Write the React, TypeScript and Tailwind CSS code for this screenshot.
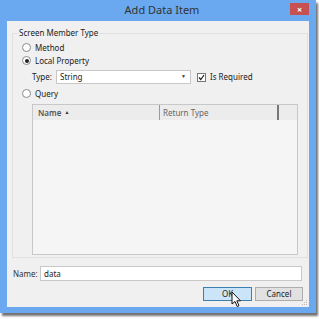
import React from 'react';

const font = { fontFamily: '"Noto Sans", "Open Sans", sans-serif' };

function Radio({ label, checked }: { label: string; checked?: boolean }) {
  return (
    <div className="flex items-center h-[13px] gap-[4px]">
      <div className="w-[9px] h-[9px] rounded-full border border-[#8a8a8a] bg-white flex items-center justify-center">
        {checked && <div className="w-[4px] h-[4px] rounded-full bg-[#222]" />}
      </div>
      <span className="text-[8px] text-[#222]">{label}</span>
    </div>
  );
}

export default function App() {
  return (
    <div className="w-[319px] h-[319px] bg-white" style={font}>
      <div className="w-[316px] h-[313px] bg-[#6aa8f0] shadow-[2px_3px_2px_rgba(0,0,0,0.55)] flex flex-col">
        {/* title bar */}
        <div className="relative h-[21px] flex items-center justify-center">
          <span className="text-[11px] text-[#333] pl-[8px]">Add Data Item</span>
          <div className="absolute right-[7px] top-[3px] w-[19px] h-[12px] bg-[#c75050] flex items-center justify-center">
            <span className="text-white text-[9px] font-bold leading-none">×</span>
          </div>
        </div>

        {/* content */}
        <div className="relative mx-[7px] h-[286px] bg-[#f0f0f0] flex flex-col">
          <fieldset className="mx-[5px] mt-[6px] h-[231px] border border-[#e0e0e0] px-[9px]">
            <legend className="text-[8px] text-[#222] px-[1px] -ml-[4px]">Screen Member Type</legend>
            <div className="flex flex-col">
              <div className="mt-[2px]"><Radio label="Method" /></div>
              <div><Radio label="Local Property" checked /></div>
              <div className="flex items-center mt-[3px] ml-[10px] h-[14px]">
                <span className="text-[8px] text-[#222] w-[24px]">Type:</span>
                <div className="w-[135px] h-[14px] border border-[#c8c8c8] bg-white flex items-center justify-between pl-[3px] pr-[4px]">
                  <span className="text-[8px] text-[#222]">String</span>
                  <span className="text-[5px] text-[#333]">▼</span>
                </div>
                <div className="ml-[6px] w-[9px] h-[9px] border border-[#777] bg-white flex items-center justify-center">
                  <svg width="7" height="7" viewBox="0 0 7 7">
                    <path d="M1 3.5 L2.8 5.5 L6 1" stroke="#222" strokeWidth="1.2" fill="none" />
                  </svg>
                </div>
                <span className="ml-[4px] text-[8px] text-[#222]">Is Required</span>
              </div>
              <div className="mt-[3px]"><Radio label="Query" /></div>
              <div className="mt-[4px] ml-[10px] w-[266px] h-[151px] border border-[#c8c8c8] bg-[#f5f5f5] flex flex-col">
                <div className="flex h-[15px] bg-[#ececec] text-[8px]">
                  <div className="w-[127px] border-r border-[#9a9a9a] flex items-center pl-[5px] gap-[3px]">
                    <span className="text-[#555] font-semibold">Name</span>
                    <span className="text-[5px] text-[#333]">▲</span>
                  </div>
                  <div className="w-[119px] border-r-2 border-[#777] flex items-center pl-[3px]">
                    <span className="text-[#666]">Return Type</span>
                  </div>
                  <div className="flex-1" />
                </div>
              </div>
            </div>
          </fieldset>

          <div className="flex items-center mt-[8px] ml-[6px] h-[15px]">
            <span className="text-[8px] text-[#333] w-[27px]">Name:</span>
            <div className="w-[262px] h-[15px] border border-[#c8c8c8] bg-white flex items-center pl-[3px]">
              <span className="text-[8px] text-[#222]">data</span>
            </div>
          </div>

          <div className="flex justify-end gap-[3px] mt-[6px] mr-[6px]">
            <div className="w-[49px] h-[14px] bg-[#cce4f7] border border-[#3c7fb1] flex items-center justify-center">
              <span className="text-[8px] text-[#222]">OK</span>
            </div>
            <div className="w-[48px] h-[14px] bg-[#e1e1e1] border border-[#adadad] flex items-center justify-center">
              <span className="text-[8px] text-[#222]">Cancel</span>
            </div>
          </div>

          {/* cursor */}
          <svg className="absolute left-[224px] top-[270px]" width="11" height="17" viewBox="0 0 11 17">
            <path d="M1 1 L1 13 L4 10.5 L6.2 15.5 L8 14.7 L5.8 9.8 L9.5 9.8 Z" fill="white" stroke="#111" strokeWidth="1" strokeLinejoin="round" />
          </svg>

          {/* grip */}
          <svg className="absolute right-[1px] bottom-[1px]" width="7" height="7" viewBox="0 0 7 7">
            <rect x="5" y="1" width="1" height="1" fill="#bbb" />
            <rect x="3" y="3" width="1" height="1" fill="#bbb" />
            <rect x="5" y="3" width="1" height="1" fill="#bbb" />
            <rect x="1" y="5" width="1" height="1" fill="#bbb" />
            <rect x="3" y="5" width="1" height="1" fill="#bbb" />
            <rect x="5" y="5" width="1" height="1" fill="#bbb" />
          </svg>
        </div>
      </div>
    </div>
  );
}
